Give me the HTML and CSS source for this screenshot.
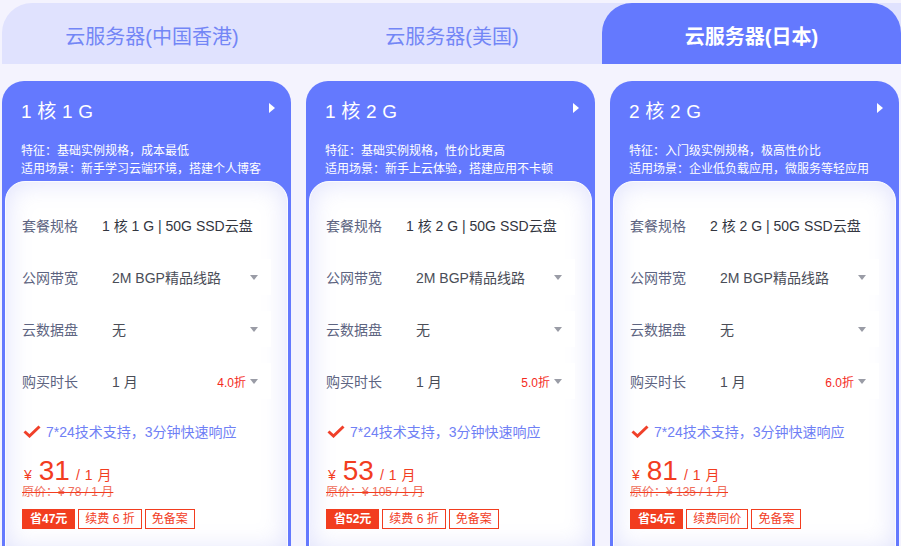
FILE: index.html
```html
<!DOCTYPE html>
<html lang="zh-CN">
<head>
<meta charset="utf-8">
<title>云服务器</title>
<link rel="stylesheet" href="styles.css">
</head>
<body>
<div class="page">
  <div class="tabs">
    <div class="tab tab-first">云服务器(中国香港)</div>
    <div class="tab">云服务器(美国)</div>
    <div class="tab tab-active">云服务器(日本)</div>
  </div>

  <div class="cards">
    <div class="card">
      <div class="card-head">
        <div class="title-row"><span class="title">1 核 1 G</span><span class="arrow"></span></div>
        <div class="feat">特征：基础实例规格，成本最低</div>
        <div class="feat">适用场景：新手学习云端环境，搭建个人博客</div>
      </div>
      <div class="panel">
        <div class="row"><span class="label">套餐规格</span><span class="plain">1 核 1 G | 50G SSD云盘</span></div>
        <div class="row"><span class="label">公网带宽</span><div class="select"><span>2M BGP精品线路</span><i class="caret"></i></div></div>
        <div class="row"><span class="label">云数据盘</span><div class="select"><span>无</span><i class="caret"></i></div></div>
        <div class="row"><span class="label">购买时长</span><div class="select"><span>1 月</span><span class="disc">4.0折</span><i class="caret"></i></div></div>
        <div class="support"><svg class="check" viewBox="0 0 18 13" width="18" height="13"><path d="M1.5 6.5 L6.5 11 L16.5 1.5" fill="none" stroke="#f0402a" stroke-width="3"/></svg><span>7*24技术支持，3分钟快速响应</span></div>
        <div class="price"><span class="yen">¥</span><span class="num">31</span><span class="per">/ 1 月</span></div>
        <div class="orig">原价：¥ 78 / 1 月</div>
        <div class="tags"><span class="tag tag-fill">省47元</span><span class="tag">续费 6 折</span><span class="tag">免备案</span></div>
      </div>
    </div>

    <div class="card">
      <div class="card-head">
        <div class="title-row"><span class="title">1 核 2 G</span><span class="arrow"></span></div>
        <div class="feat">特征：基础实例规格，性价比更高</div>
        <div class="feat">适用场景：新手上云体验，搭建应用不卡顿</div>
      </div>
      <div class="panel">
        <div class="row"><span class="label">套餐规格</span><span class="plain">1 核 2 G | 50G SSD云盘</span></div>
        <div class="row"><span class="label">公网带宽</span><div class="select"><span>2M BGP精品线路</span><i class="caret"></i></div></div>
        <div class="row"><span class="label">云数据盘</span><div class="select"><span>无</span><i class="caret"></i></div></div>
        <div class="row"><span class="label">购买时长</span><div class="select"><span>1 月</span><span class="disc">5.0折</span><i class="caret"></i></div></div>
        <div class="support"><svg class="check" viewBox="0 0 18 13" width="18" height="13"><path d="M1.5 6.5 L6.5 11 L16.5 1.5" fill="none" stroke="#f0402a" stroke-width="3"/></svg><span>7*24技术支持，3分钟快速响应</span></div>
        <div class="price"><span class="yen">¥</span><span class="num">53</span><span class="per">/ 1 月</span></div>
        <div class="orig">原价：¥ 105 / 1 月</div>
        <div class="tags"><span class="tag tag-fill">省52元</span><span class="tag">续费 6 折</span><span class="tag">免备案</span></div>
      </div>
    </div>

    <div class="card">
      <div class="card-head">
        <div class="title-row"><span class="title">2 核 2 G</span><span class="arrow"></span></div>
        <div class="feat">特征：入门级实例规格，极高性价比</div>
        <div class="feat">适用场景：企业低负载应用，微服务等轻应用</div>
      </div>
      <div class="panel">
        <div class="row"><span class="label">套餐规格</span><span class="plain">2 核 2 G | 50G SSD云盘</span></div>
        <div class="row"><span class="label">公网带宽</span><div class="select"><span>2M BGP精品线路</span><i class="caret"></i></div></div>
        <div class="row"><span class="label">云数据盘</span><div class="select"><span>无</span><i class="caret"></i></div></div>
        <div class="row"><span class="label">购买时长</span><div class="select"><span>1 月</span><span class="disc">6.0折</span><i class="caret"></i></div></div>
        <div class="support"><svg class="check" viewBox="0 0 18 13" width="18" height="13"><path d="M1.5 6.5 L6.5 11 L16.5 1.5" fill="none" stroke="#f0402a" stroke-width="3"/></svg><span>7*24技术支持，3分钟快速响应</span></div>
        <div class="price"><span class="yen">¥</span><span class="num">81</span><span class="per">/ 1 月</span></div>
        <div class="orig">原价：¥ 135 / 1 月</div>
        <div class="tags"><span class="tag tag-fill">省54元</span><span class="tag">续费同价</span><span class="tag">免备案</span></div>
      </div>
    </div>
  </div>
</div>
</body>
</html>
```

FILE: styles.css
```css
* { box-sizing: border-box; }
html, body { margin: 0; padding: 0; }
body {
  background: #f4f3fe;
  font-family: "Liberation Sans", "Noto Sans CJK SC", sans-serif;
  overflow: hidden;
  width: 901px;
  height: 546px;
}
.page { padding: 3px 0 0 2px; }

.tabs {
  display: flex;
  height: 61px;
  background: #e0e2fe;
  border-top-left-radius: 30px;
}
.tab {
  flex: 1;
  display: flex;
  align-items: center;
  justify-content: center;
  font-size: 20px;
  color: #7386f6;
  padding-top: 3px;
}
.tab-active {
  background: #6479fe;
  color: #fff;
  font-weight: bold;
  border-radius: 30px 30px 0 0;
  flex: 0 0 299px;
}

.cards {
  display: flex;
  gap: 15px;
  margin-top: 17px;
}
.card {
  width: 289px;
  height: 470px;
  background: #6479fe;
  border-radius: 22px 22px 0 0;
  padding: 0 3px;
  flex-shrink: 0;
}
.card-head {
  height: 100px;
  padding: 19px 13px 0 16px;
  color: #fff;
}
.title-row {
  display: flex;
  justify-content: space-between;
  align-items: flex-start;
  height: 28px;
  margin-bottom: 14px;
}
.title {
  font-size: 19px;
  letter-spacing: 0.2px;
  line-height: 24px;
}
.arrow {
  width: 0; height: 0;
  border-left: 6px solid #fff;
  border-top: 5px solid transparent;
  border-bottom: 5px solid transparent;
  margin-top: 3px;
}
.feat {
  font-size: 12px;
  line-height: 18px;
}

.panel {
  height: 370px;
  background: #fff;
  border: 1px solid #fbfbff;
  border-radius: 20px 20px 0 0;
  box-shadow: inset 0 0 26px rgba(110, 120, 240, 0.22);
  padding: 25px 16px 0 16px;
}
.row {
  display: flex;
  align-items: center;
  height: 36px;
  margin-bottom: 16px;
}
.label {
  width: 80px;
  font-size: 14px;
  color: #5d6481;
}
.plain {
  font-size: 14px;
  color: #33363f;
}
.select {
  flex: 1;
  height: 36px;
  background: #fff;
  display: flex;
  align-items: center;
  padding: 0 10px;
  font-size: 14px;
  color: #4a4d57;
}
.select span:first-child { flex: 1; }
.disc {
  color: #f42a1d;
  font-size: 12px;
  margin-right: 2px;
}
.caret {
  width: 0; height: 0;
  border-top: 5px solid #9a9ca6;
  border-left: 4.5px solid transparent;
  border-right: 4.5px solid transparent;
  margin-left: 2px;
  margin-right: 3px;
}

.support {
  display: flex;
  align-items: center;
  margin-top: 22px;
  height: 20px;
  font-size: 14px;
  color: #6f80f5;
}
.check { margin: 0 5px 0 1px; }

.price {
  display: flex;
  align-items: baseline;
  margin-top: 14px;
  color: #f23d1f;
  height: 30px;
}
.yen { font-size: 14px; margin: 0 7px 0 2px; }
.num { font-size: 28px; margin-right: 6px; }
.per { font-size: 14px; letter-spacing: 0.5px; }

.orig {
  margin-top: -1px;
  font-size: 12px;
  color: #ef6e5c;
  text-decoration: line-through;
  text-decoration-color: #f23d1f;
  line-height: 16px;
}
.tags {
  display: flex;
  gap: 3px;
  margin-top: 9px;
}
.tag {
  height: 20px;
  padding: 0 6px;
  border: 1px solid #f23d1f;
  color: #f23d1f;
  font-size: 12px;
  line-height: 18px;
  display: flex;
  align-items: center;
}
.tag-fill {
  background: #f23d1f;
  color: #fff;
  font-weight: bold;
  padding: 0 7px;
}
```
